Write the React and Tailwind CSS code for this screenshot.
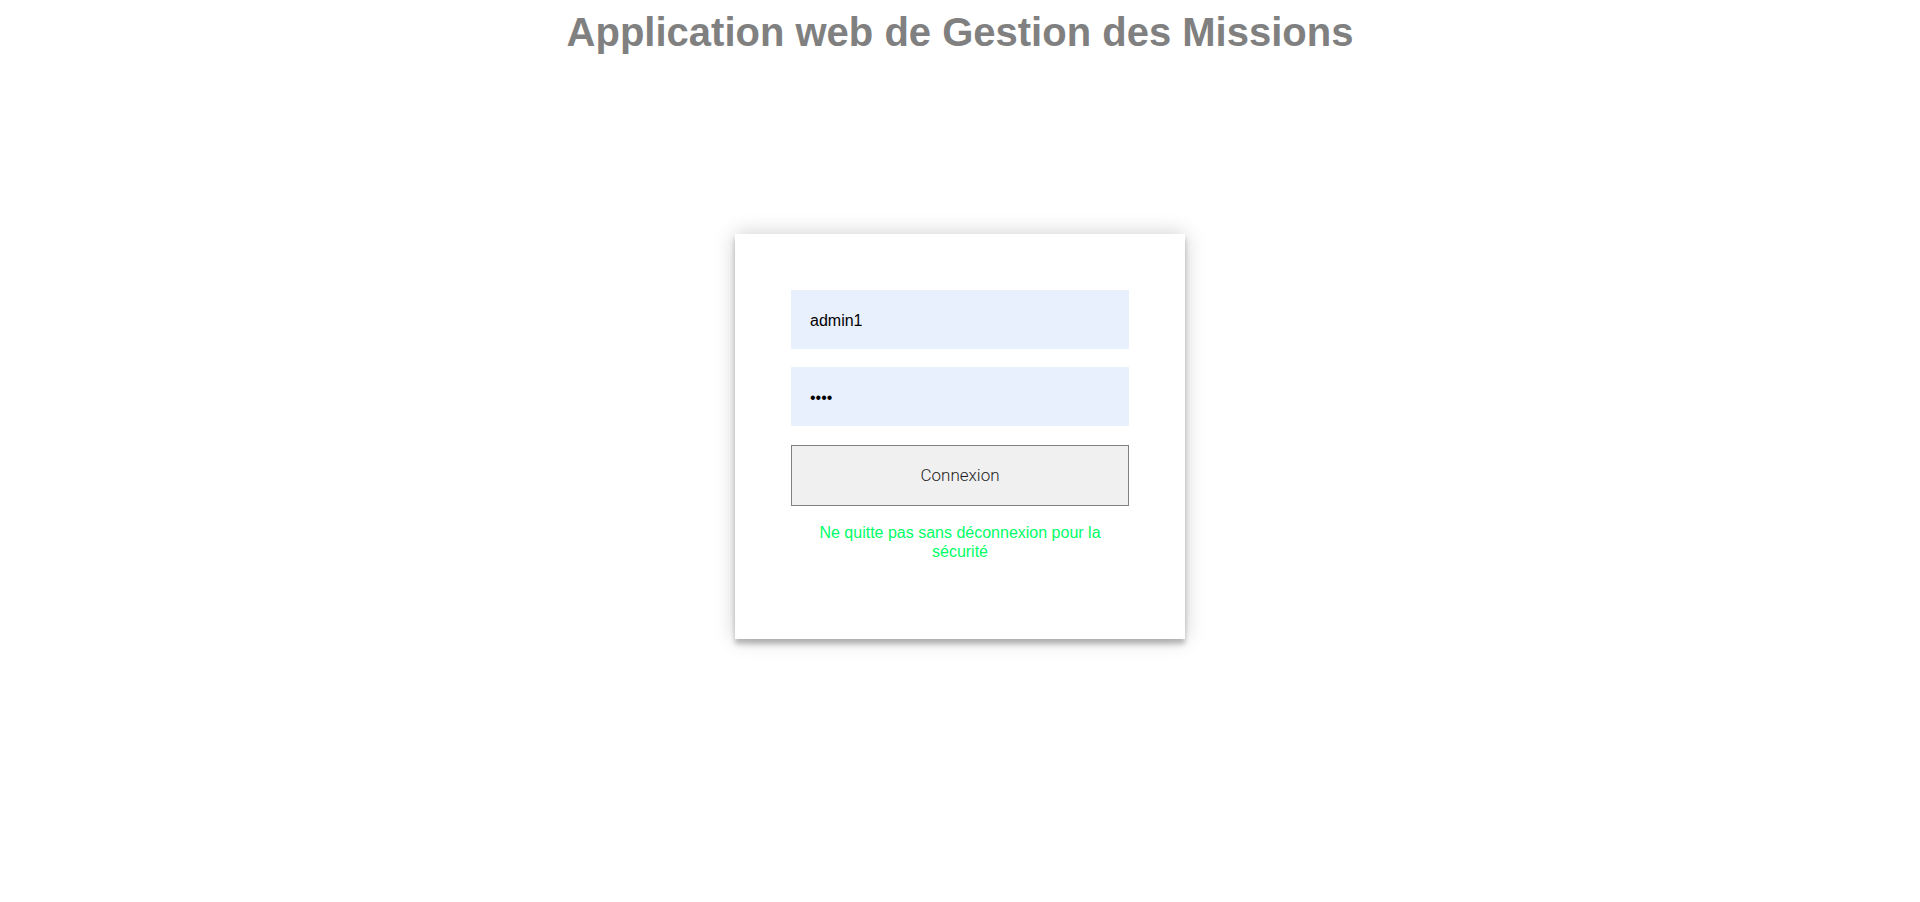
export default function App() {
  return (
    <div className="min-h-[902px] bg-white" style={{ fontFamily: '"Liberation Sans", Arial, sans-serif' }}>
      <h1 className="pt-[9px] text-center text-[40px] leading-[46px] font-bold text-[#808080]">
        Application web de Gestion des Missions
      </h1>

      <div className="mx-auto mt-[179px] w-[450px] h-[405px] bg-white px-[56px] pt-[56px] shadow-[0_0_20px_0_rgba(0,0,0,0.2),0_5px_5px_0_rgba(0,0,0,0.24)]">
        <form className="flex flex-col" onSubmit={(e) => e.preventDefault()}>
          <input
            type="text"
            defaultValue="admin1"
            readOnly
            className="h-[59px] w-full bg-[#e8f0fe] pl-[19px] pt-[2px] text-[16px] text-black outline-none"
          />
          <input
            type="password"
            defaultValue="1234"
            readOnly
            className="mt-[18px] h-[59px] w-full bg-[#e8f0fe] pl-[19px] pt-[2px] text-[16px] text-black outline-none"
          />
          <button
            type="submit"
            className="mt-[19px] h-[61px] w-full border border-[#808080] bg-[#f0f0f0] text-[17px] font-light text-[#1f1f1f]"
            style={{ fontFamily: 'Roboto, sans-serif' }}
          >
            Connexion
          </button>
          <p className="mt-[17px] text-center text-[16px] leading-[19px] text-[#00ff66]">
            Ne quitte pas sans déconnexion pour la sécurité
          </p>
        </form>
      </div>
    </div>
  );
}
